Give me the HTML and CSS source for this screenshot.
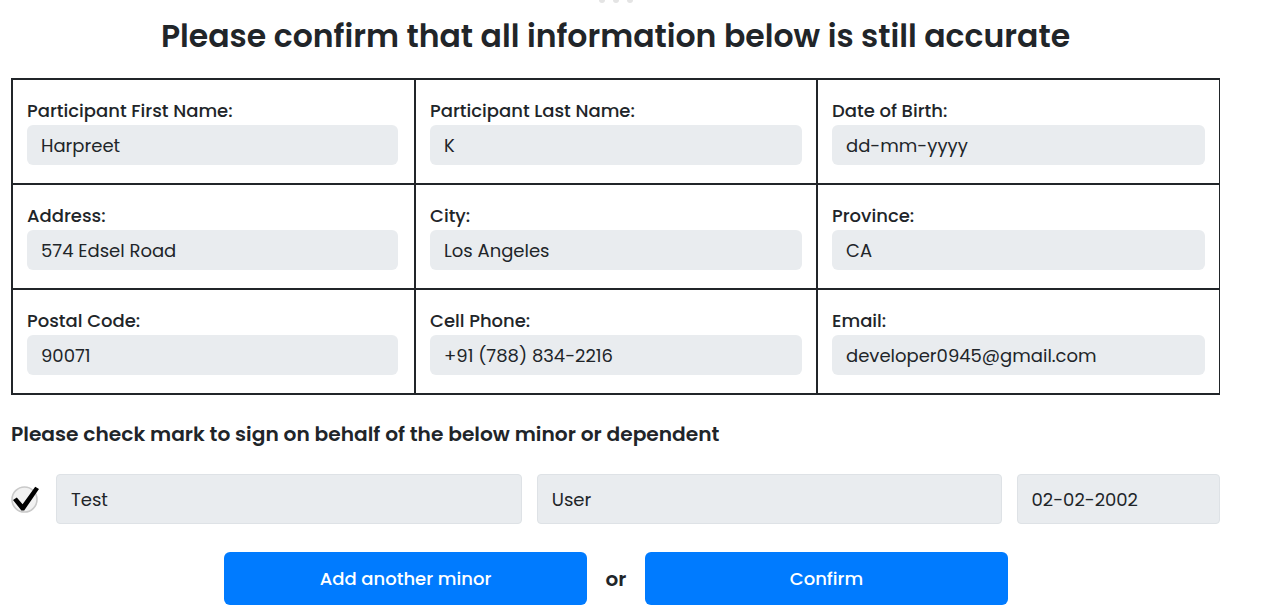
FILE: index.html
```html
<!DOCTYPE html>
<html>
<head>
<meta charset="utf-8">
<link rel="stylesheet" href="styles.css">
</head>
<body>
<div class="page">
  <svg class="dots" width="40" height="6" viewBox="0 0 40 6"><circle cx="6" cy="0" r="3" fill="#e4e4e4"/><circle cx="20" cy="0" r="3" fill="#e4e4e4"/><circle cx="34" cy="0" r="3" fill="#e4e4e4"/></svg>
  <h1 class="title">Please confirm that all information below is still accurate</h1>
  <div class="info-grid">
    <div class="cell"><label class="lbl">Participant First Name:</label><div class="field">Harpreet</div></div>
    <div class="cell"><label class="lbl">Participant Last Name:</label><div class="field">K</div></div>
    <div class="cell"><label class="lbl">Date of Birth:</label><div class="field">dd-mm-yyyy</div></div>
    <div class="cell"><label class="lbl">Address:</label><div class="field">574 Edsel Road</div></div>
    <div class="cell"><label class="lbl">City:</label><div class="field">Los Angeles</div></div>
    <div class="cell"><label class="lbl">Province:</label><div class="field">CA</div></div>
    <div class="cell"><label class="lbl">Postal Code:</label><div class="field">90071</div></div>
    <div class="cell"><label class="lbl">Cell Phone:</label><div class="field">+91 (788) 834-2216</div></div>
    <div class="cell"><label class="lbl">Email:</label><div class="field">developer0945@gmail.com</div></div>
  </div>
  <h2 class="subtitle">Please check mark to sign on behalf of the below minor or dependent</h2>
  <div class="minor-row">
    <span class="check">
      <svg width="29" height="28" viewBox="0 0 29 28">
        <circle cx="13.5" cy="13.5" r="12.5" fill="#f2f2f2" stroke="#c9c9c9" stroke-width="1.6"/>
        <path d="M2 14 L5.8 11.6 L11.6 18.2 L24.2 0.8 L28 3 L13.2 24.5 L10.4 24.5 Z" fill="#000"/>
      </svg>
    </span>
    <div class="mfield first">Test</div>
    <div class="mfield last">User</div>
    <div class="mfield dob">02-02-2002</div>
  </div>
  <div class="actions">
    <button class="btn">Add another minor</button>
    <span class="or">or</span>
    <button class="btn">Confirm</button>
  </div>
</div>
</body>
</html>
```
FILE: styles.css
```css
* { box-sizing: border-box; }
html, body { margin: 0; padding: 0; background: #fff; }
body {
  font-family: Poppins, "Open Sans", "Noto Sans", sans-serif;
  color: #212529;
}
.page {
  width: 1209px;
  margin-left: 11px;
  position: relative;
}
.dots {
  position: absolute;
  top: 0;
  left: 585px;
}
.title {
  margin: 0;
  padding-top: 14px;
  height: 78px;
  text-align: center;
  font-size: 31.5px;
  font-weight: 600;
  line-height: 44px;
  color: #212529;
}
.info-grid {
  display: grid;
  grid-template-columns: 401px 400px 401px;
  gap: 2px;
  background: #212529;
  border: 2px solid #212529;
  width: 1209px;
}
.cell {
  background: #fff;
  padding: 18px 14px 18px 14px;
  height: 103px;
  display: flex;
  flex-direction: column;
}
.lbl {
  font-size: 18px;
  line-height: 26px;
  font-weight: 500;
  margin-bottom: 1px;
  color: #212529;
}
.field {
  background: #e9ecef;
  border-radius: 6px;
  height: 40px;
  padding: 0 14px;
  display: flex;
  align-items: center;
  font-size: 18px;
  color: #212529;
}
.cell:nth-child(3n+1) .field { margin-right: 2px; }
.subtitle {
  margin: 24px 0 0;
  font-size: 20.2px;
  line-height: 30px;
  font-weight: 600;
  height: 55px;
}
.minor-row {
  display: flex;
  align-items: center;
  gap: 15px;
  height: 50px;
}
.check {
  width: 29px;
  height: 28px;
  margin-right: 1px;
  display: flex;
  margin-top: 2px;
}
.mfield {
  height: 50px;
  background: #e9ecef;
  border: 1px solid #dee2e6;
  border-radius: 4px;
  padding: 0 14px;
  display: flex;
  align-items: center;
  font-size: 18px;
}
.mfield.first { width: 467px; }
.mfield.last { width: 466px; }
.mfield.dob { width: 204px; }
.actions {
  display: flex;
  justify-content: center;
  align-items: center;
  margin-top: 28px;
  padding-left: 1px;
}
.btn {
  width: 363px;
  height: 53px;
  background: #007bff;
  color: #fff;
  border: none;
  border-radius: 6px;
  font-family: inherit;
  font-size: 18px;
  font-weight: 500;
}
.or {
  width: 58px;
  text-align: center;
  font-size: 20px;
  font-weight: 600;
}
```
